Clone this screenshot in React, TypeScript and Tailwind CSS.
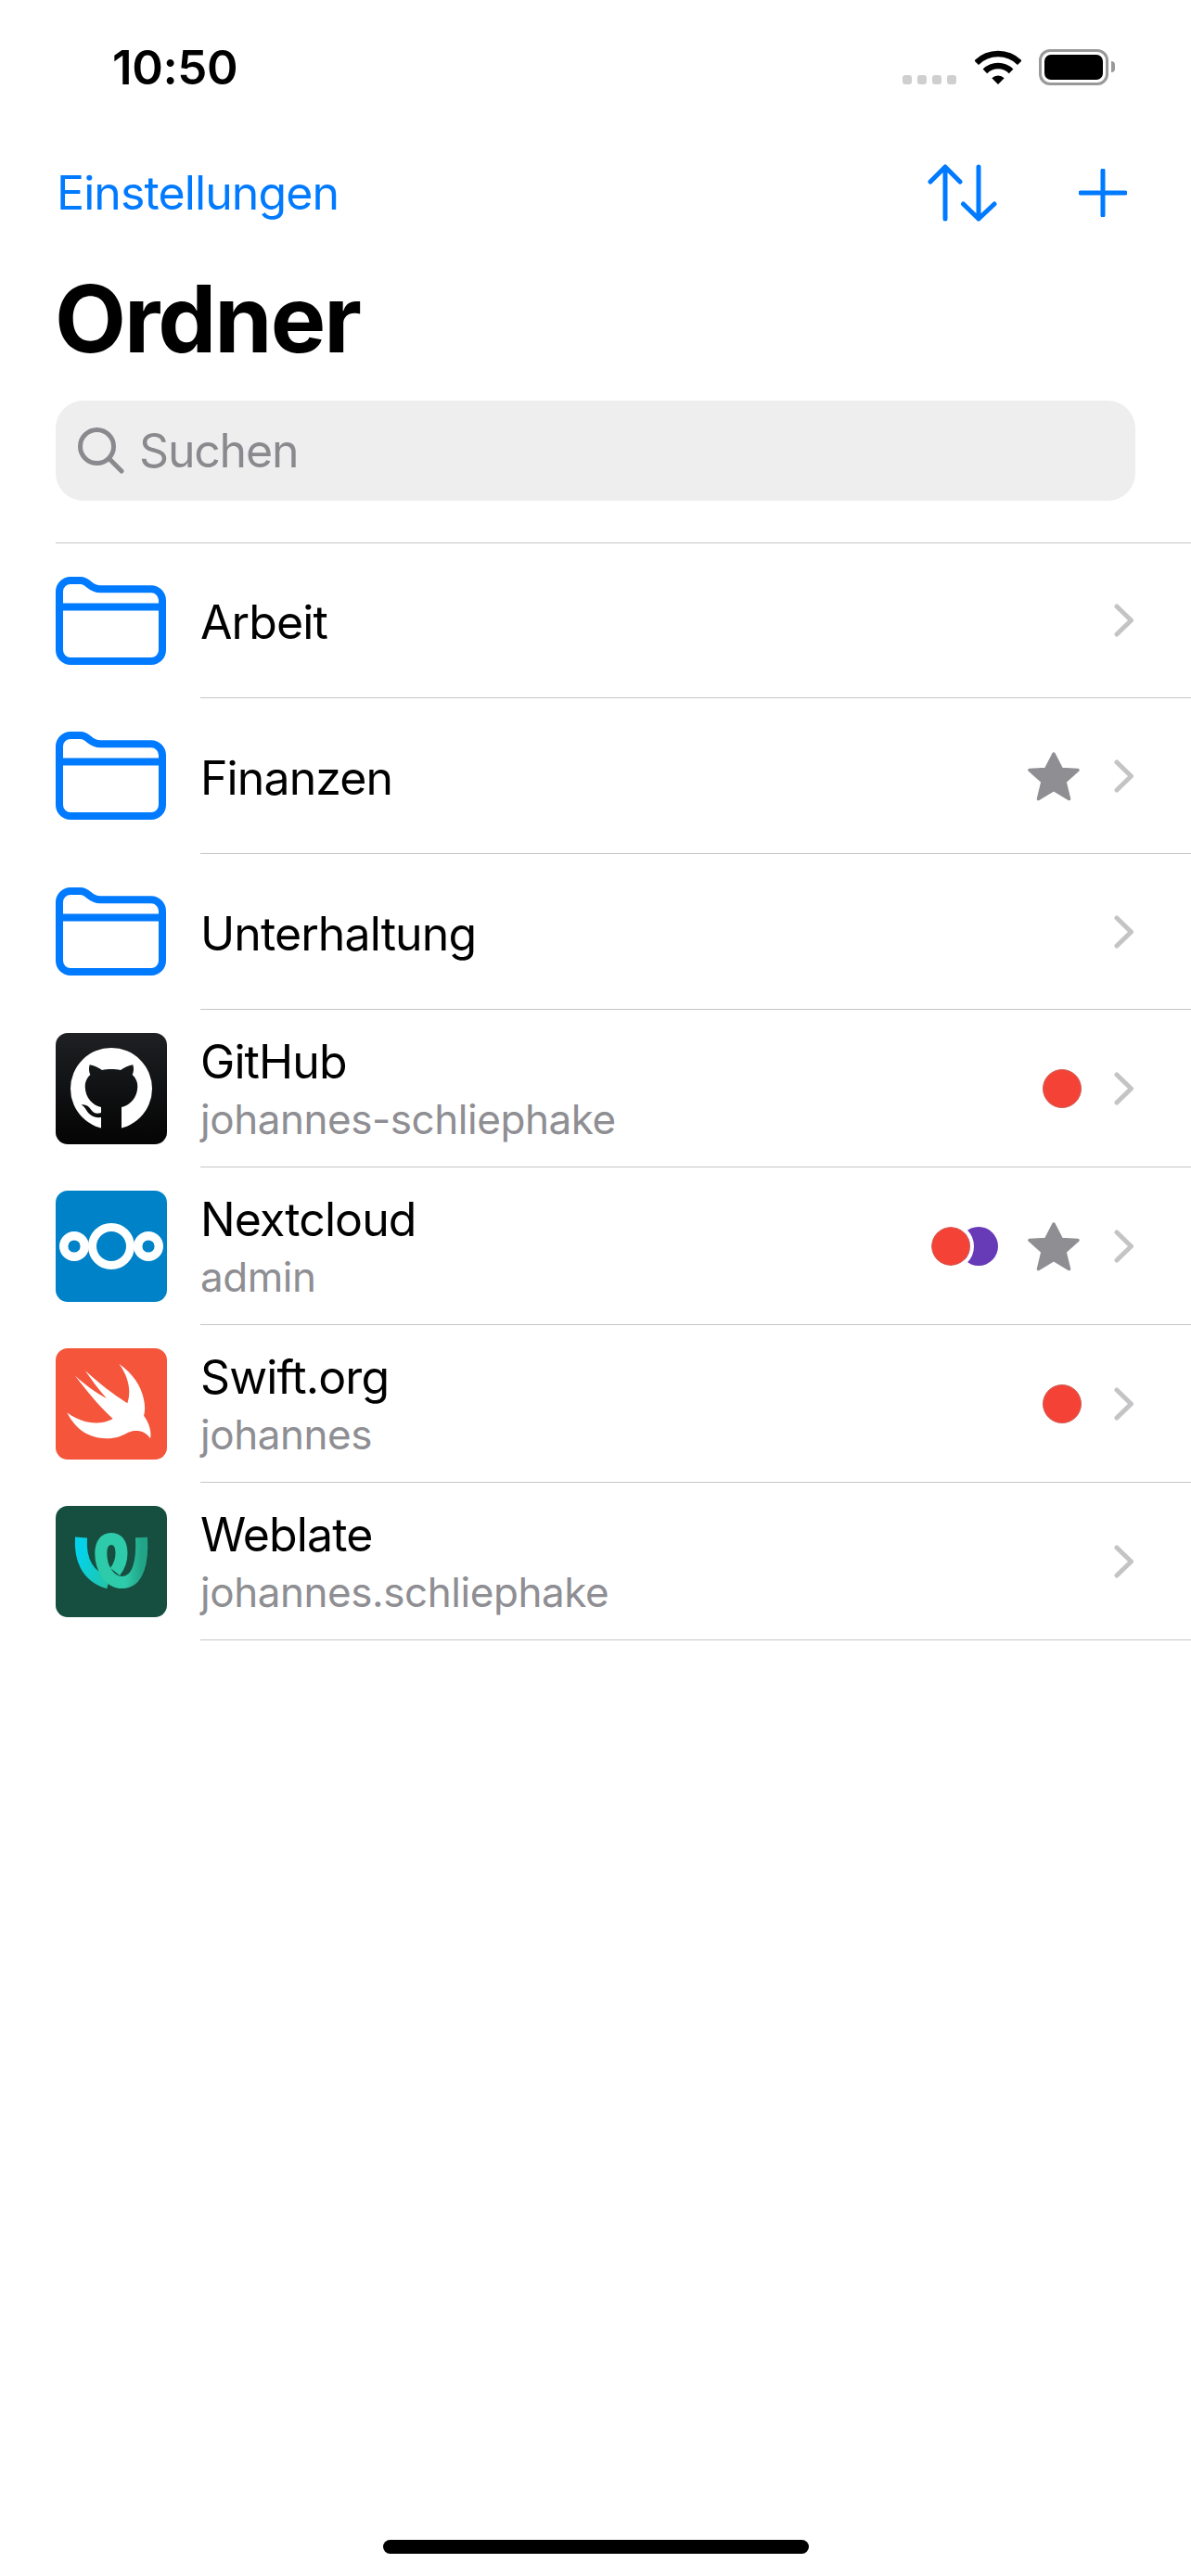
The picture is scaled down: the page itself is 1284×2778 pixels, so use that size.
import React from "react";

const BLUE = "#007aff";

function FolderIcon() {
  return (
    <svg width="120" height="96" viewBox="0 0 120 96" fill="none" stroke="#007aff" strokeWidth="8">
      <path d="M4 16a12 12 0 0 1 12-12H27C35 4 37 13.3 48 13.3H103a12 12 0 0 1 12 12V79a12 12 0 0 1-12 12H16a12 12 0 0 1-12-12Z" />
      <path d="M4 32.5H115" />
    </svg>
  );
}

function GithubLogo() {
  return (
    <div className="w-[120px] h-[120px] rounded-[13px] bg-linear-to-b from-[#1e2023] to-[#050505]">
      <svg width="120" height="120" viewBox="0 0 120 120">
        <mask id="gh">
          <circle cx="60" cy="60" r="44" fill="#ffffff" />
          <path
            d="M36.7 34.3C41 34.8 46 37.5 50 40C56 38.8 64 38.8 70 40C74 37.5 79 34.8 83.3 34.3C84.5 38 84.2 42 82.7 45C86.5 48.5 88.5 53 88.3 58C88 70 80 78 71 80V110H49V91C41 92 36 88 33 83C31.5 80.5 30 78.5 27.7 77.5C32 76.5 36 79 38 82.5C40.5 86.5 44.5 87.5 49 86V80C40 78 32 70 31.7 58C31.5 53 33.5 48.5 37.3 45C35.8 42 35.5 38 36.7 34.3Z"
            fill="#000000"
          />
        </mask>
        <rect width="120" height="120" fill="#ffffff" mask="url(#gh)" />
      </svg>
    </div>
  );
}

function NextcloudLogo() {
  return (
    <div className="w-[120px] h-[120px] rounded-[13px] bg-[#0082c9]">
      <svg width="120" height="120" viewBox="0 0 120 120" fill="none" stroke="#ffffff">
        <circle cx="60" cy="60" r="20.5" strokeWidth="9" />
        <circle cx="20" cy="60" r="11.3" strokeWidth="9.4" />
        <circle cx="100" cy="60" r="11.3" strokeWidth="9.4" />
      </svg>
    </div>
  );
}

function SwiftLogo() {
  return (
    <div className="w-[120px] h-[120px] rounded-[13px] bg-[#f4553b]">
      <svg width="120" height="120" viewBox="0 0 120 120" fill="#ffffff">
        <path d="M68.3 16.7C83 27 92 40 95 55C96.5 62 96.5 68 95 72.7C99 78 104 88 102 97.3C98 91 92 88.5 85 89C79 89.5 75 93 68 95.5C58 98.5 46 98 34 92.5C25 88 17 79 12.3 69.3C28 81 47 84 61.7 76C47 63 33 45 20.7 29.3C32 40 44 48 55 54.3C46 44 38 33 31.7 24C46 37 61 49 77.3 59.3C82 45 78 30 68.3 16.7Z" />
      </svg>
    </div>
  );
}

function WeblateLogo() {
  return (
    <div className="w-[120px] h-[120px] rounded-[13px] bg-[#164e40]">
      <svg width="120" height="120" viewBox="0 0 120 120" fill="none" strokeWidth="13">
        <defs>
          <linearGradient id="wl" x1="0" y1="0" x2="1" y2="1">
            <stop offset="0.2" stopColor="#05d2e8" />
            <stop offset="1" stopColor="#22c4a8" />
          </linearGradient>
          <linearGradient id="wr" x1="0" y1="0" x2="1" y2="0">
            <stop offset="0.6" stopColor="#2ecbaa" />
            <stop offset="1" stopColor="#22a488" />
          </linearGradient>
        </defs>
        <path d="M27.5 34C26 56 33 76 57 83" stroke="url(#wl)" />
        <path d="M92.5 34C94 60 89 82.5 71.7 82.5C57 82.5 48.8 66 48.8 51C48.8 41 53 35.5 60 35.5C67 35.5 71 41 71 51C71 59 68 66 64 71" stroke="url(#wr)" />
      </svg>
    </div>
  );
}

function Star() {
  return (
    <svg width="56" height="54" viewBox="0 0 56 54" fill="#8e8e93" stroke="#8e8e93" strokeWidth="3.5" strokeLinejoin="round">
      <path d="M28 3L36.5 19.5L54 20.5L40 33L44.5 51.5L28 41.5L11.5 51.5L16 33L2 20.5L19.5 19.5Z" />
    </svg>
  );
}

function Chevron() {
  return (
    <svg width="21" height="36" viewBox="0 0 21 36" fill="none" stroke="#c4c4c6" strokeWidth="5" strokeLinecap="round" strokeLinejoin="round">
      <path d="M3 3L18.5 18L3 33" />
    </svg>
  );
}

function Dot({ color, className = "" }: { color: string; className?: string }) {
  return <div className={`w-[42px] h-[42px] rounded-full border border-[#cf5f58] ${color} ${className}`} />;
}

function Row({
  icon,
  title,
  subtitle,
  trailing,
  star,
  first,
}: {
  icon: React.ReactNode;
  title: string;
  subtitle?: string;
  trailing?: React.ReactNode;
  star?: boolean;
  first?: boolean;
}) {
  const height = first ? "h-[167px]" : subtitle ? "h-[170px]" : "h-[168px]";
  return (
    <div className={`flex items-center ${height}`}>
      <div className="w-[216px] shrink-0 pl-[60px]">{icon}</div>
      <div className="flex-1 h-full flex items-center border-b border-[#c6c6c8] pr-[62px]">
        <div className="flex-1 min-w-0 pt-[5px]">
          <div className="text-[50px] leading-[61px] tracking-[-0.9px] text-black">{title}</div>
          {subtitle && <div className="mt-px text-[44px] leading-[61px] tracking-[-0.45px] text-[#8e8e93]">{subtitle}</div>}
        </div>
        {trailing}
        {star && (
          <div className="ml-[32px]">
            <Star />
          </div>
        )}
        <div className={`${star ? "ml-[37px]" : "ml-[35px]"}`}>
          <Chevron />
        </div>
      </div>
    </div>
  );
}

export default function App() {
  return (
    <div className="w-[1284px] h-[2778px] bg-white flex flex-col overflow-hidden font-['Inter','Liberation_Sans',sans-serif]">
      <div className="h-[144px] flex items-center justify-between pl-[121px] pr-[82px]">
        <div className="text-[51px] font-semibold tracking-[-0.4px] text-black leading-none">10:50</div>
        <div className="flex items-center">
          <div className="flex gap-[6px] mt-[28px]">
            <div className="w-[10px] h-[10px] rounded-[3px] bg-[#cfcfcf]" />
            <div className="w-[10px] h-[10px] rounded-[3px] bg-[#cfcfcf]" />
            <div className="w-[10px] h-[10px] rounded-[3px] bg-[#cfcfcf]" />
            <div className="w-[10px] h-[10px] rounded-[3px] bg-[#cfcfcf]" />
          </div>
          <svg className="ml-[20px]" width="50" height="37" viewBox="0 0 50 37" fill="none" stroke="#000000">
            <path d="M1.7 13.7A33 33 0 0 1 48.3 13.7" strokeWidth="6.5" />
            <path d="M10.9 22.9A20 20 0 0 1 39.1 22.9" strokeWidth="6.5" />
            <path d="M25 37L18.3 30.3A9.5 9.5 0 0 1 31.7 30.3Z" fill="#000000" stroke="none" />
          </svg>
          <div className="ml-[19px] w-[75px] h-[39px] rounded-[12px] border-[3px] border-[#999999] p-[3px]">
            <div className="w-full h-full rounded-[7px] bg-black" />
          </div>
          <div className="ml-[3px] w-[4px] h-[12px] rounded-r-full bg-[#999999]" />
        </div>
      </div>

      <div className="h-[128px] flex items-center justify-between pl-[61px] pr-[69px]">
        <div className="text-[50px] leading-none tracking-[-0.9px] text-[#007aff]">Einstellungen</div>
        <div className="flex items-center">
          <svg width="76" height="62" viewBox="0 0 76 62" fill="none" stroke={BLUE} strokeWidth="5" strokeLinecap="round" strokeLinejoin="round">
            <path d="M20 59V3M4 19L20 3L36 19" />
            <path d="M56 3V59M39.5 43L56 59L73 43" />
          </svg>
          <svg className="ml-[88px]" width="52" height="52" viewBox="0 0 52 52" fill="none" stroke={BLUE} strokeWidth="5" strokeLinecap="round">
            <path d="M26 2V50M2 26H50" />
          </svg>
        </div>
      </div>

      <div className="pl-[59px] mt-[22px] h-[100px] flex items-center">
        <div className="text-[100px] leading-none font-bold tracking-[-2px] text-black">Ordner</div>
      </div>

      <div className="mx-[60px] mt-[38px] h-[108px] rounded-[30px] bg-[#eeeeef] flex items-center pl-[24px]">
        <svg width="50" height="50" viewBox="0 0 50 50" fill="none" stroke="#8a8a8e" strokeWidth="5" strokeLinecap="round">
          <circle cx="20.5" cy="20.5" r="18" />
          <path d="M33.5 33.5L47 47" />
        </svg>
        <div className="ml-[16px] text-[50px] leading-none tracking-[-1.2px] text-[#8a8a8e]">Suchen</div>
      </div>

      <div className="mt-[45px] ml-[60px] h-px bg-[#c6c6c8]" />

      <Row first icon={<FolderIcon />} title="Arbeit" />
      <Row icon={<FolderIcon />} title="Finanzen" star />
      <Row icon={<FolderIcon />} title="Unterhaltung" />
      <Row icon={<GithubLogo />} title="GitHub" subtitle="johannes-schliephake" trailing={<Dot color="bg-[#f44336]" />} />
      <Row
        icon={<NextcloudLogo />}
        title="Nextcloud"
        subtitle="admin"
        star
        trailing={
          <div className="flex">
            <Dot color="bg-[#f44336]" className="relative outline-4 outline-white" />
            <Dot color="bg-[#673ab7]" className="-ml-[12px] border-none" />
          </div>
        }
      />
      <Row icon={<SwiftLogo />} title="Swift.org" subtitle="johannes" trailing={<Dot color="bg-[#f44336]" />} />
      <Row icon={<WeblateLogo />} title="Weblate" subtitle="johannes.schliephake" />

      <div className="flex-1" />
      <div className="self-center mb-[24px] w-[459px] h-[15px] rounded-full bg-black" />
    </div>
  );
}
